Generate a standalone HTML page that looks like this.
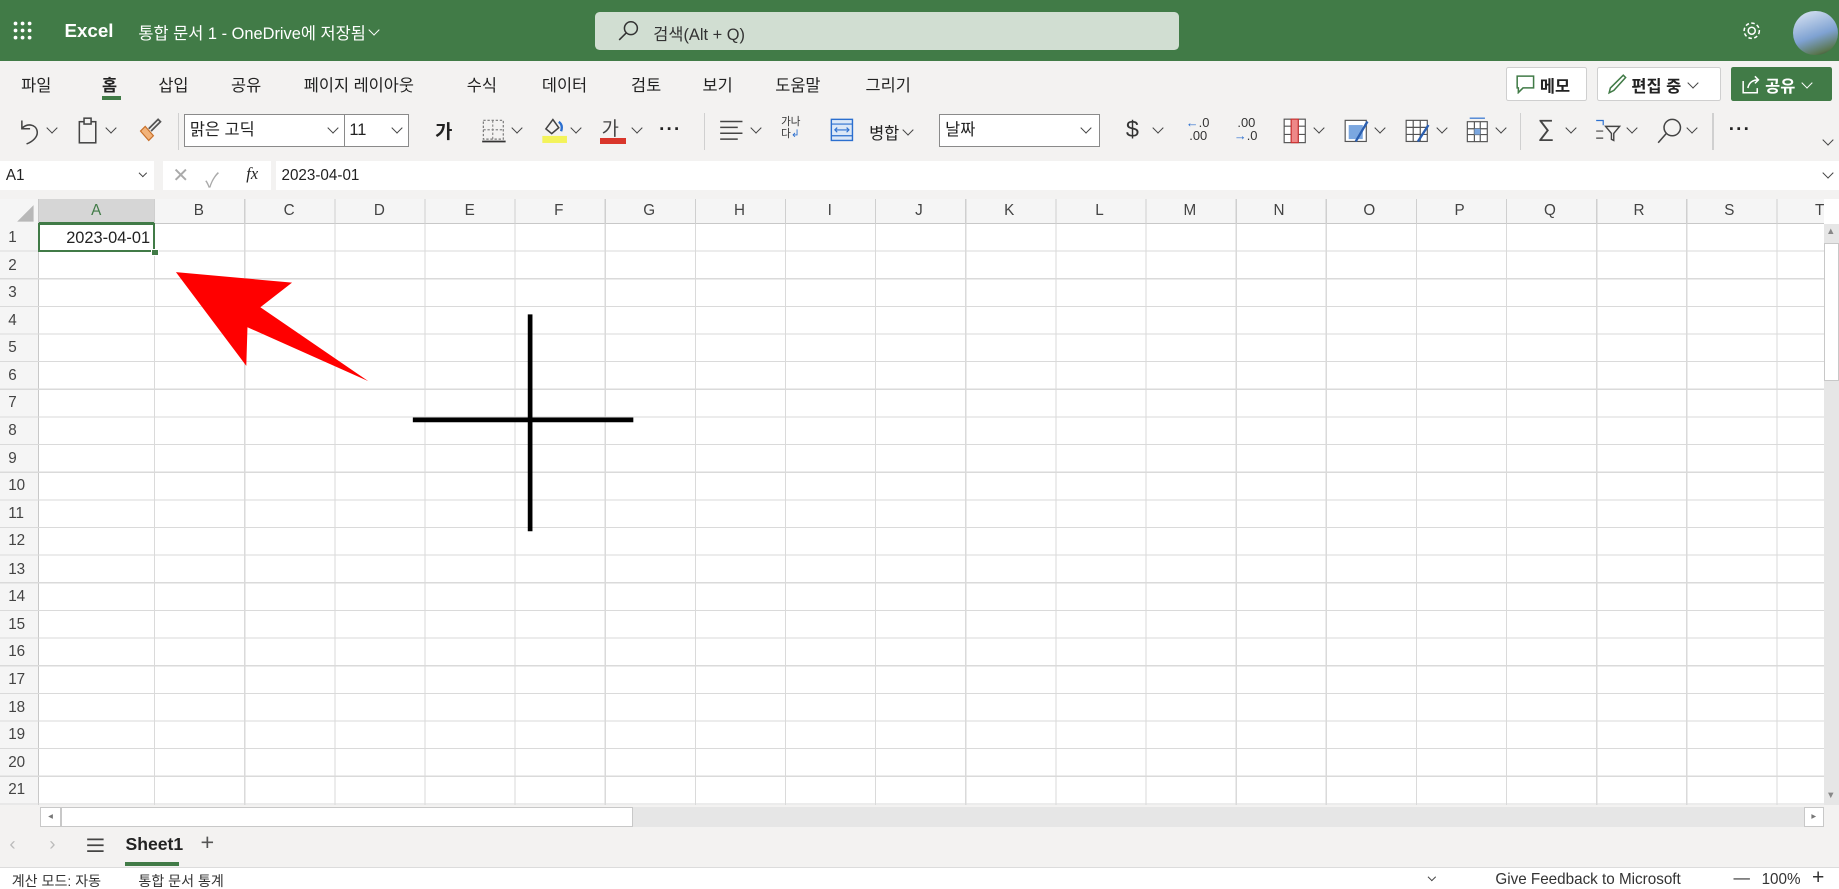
<!DOCTYPE html>
<html><head><meta charset="utf-8">
<style>
html,body{margin:0;padding:0;overflow:hidden}
body{width:1568px;height:758px;zoom:1.17283;position:relative;background:#fff;font-family:"Liberation Sans","Noto Sans CJK KR",sans-serif;color:#222}
.a{position:absolute}
.t{font-size:14px;white-space:nowrap}
.chev{display:inline-block;width:6px;height:6px;border-right:1.3px solid #444;border-bottom:1.3px solid #444;transform:rotate(45deg)}
.sep{position:absolute;width:1px;background:#d0d0d0}
.ib{position:absolute;top:97px;height:28px;background:#fff;border:1px solid #8a8a8a;box-sizing:border-box;font-size:14px;line-height:26px;padding-left:4px}
.ch{position:absolute;top:170px;height:21px;line-height:21px;text-align:center;font-size:13px;color:#444}
.rn{position:absolute;left:0;width:33px;font-size:13px;color:#444;padding-left:7px;box-sizing:border-box}
</style></head><body>
<div class="a" style="left:0;top:0;width:1568px;height:52px;background:#417b47"></div>
<svg class="a" style="left:10px;top:17px" width="20" height="20"><g fill="#fff"><circle cx="3" cy="3" r="1.6"/><circle cx="9" cy="3" r="1.6"/><circle cx="15" cy="3" r="1.6"/><circle cx="3" cy="9" r="1.6"/><circle cx="9" cy="9" r="1.6"/><circle cx="15" cy="9" r="1.6"/><circle cx="3" cy="15" r="1.6"/><circle cx="9" cy="15" r="1.6"/><circle cx="15" cy="15" r="1.6"/></g></svg>
<div class="a t" style="left:55px;top:17px;color:#fff;font-weight:bold;font-size:16px">Excel</div>
<div class="a t" style="left:118px;top:17px;color:#fff;font-size:14px">통합 문서 1 - OneDrive에 저장됨 <span class="chev" style="border-color:#fff;position:relative;top:-4px"></span></div>
<div class="a" style="left:507px;top:10px;width:498px;height:33px;background:#d1ded2;border-radius:4px"></div>
<svg class="a" style="left:527px;top:17px" width="18" height="18"><circle cx="11" cy="7" r="5.5" fill="none" stroke="#333" stroke-width="1.3"/><path d="M7 11 L1 17" stroke="#333" stroke-width="1.3"/></svg>
<div class="a t" style="left:557px;top:18px;color:#333;font-size:14px">검색(Alt + Q)</div>
<svg class="a" style="left:1484px;top:16px" width="20" height="20"><circle cx="10" cy="10" r="3" fill="none" stroke="#fff" stroke-width="1.3"/><circle cx="10" cy="10" r="6.5" fill="none" stroke="#fff" stroke-width="1.3" stroke-dasharray="3 2"/></svg>
<div class="a" style="left:1529px;top:9px;width:38px;height:38px;border-radius:50%;background:linear-gradient(160deg,#dfe8f5,#7fa2d2 55%,#5a7650 85%,#2d3b22)"></div>
<div class="a" style="left:0;top:52px;width:1568px;height:80px;background:#f3f2f1;border-bottom:1px solid #dcdcdc"></div>
<div class="a t" style="top:61px;left:18px">파일</div>
<div class="a t" style="top:61px;left:87px;font-weight:bold">홈</div>
<div class="a" style="top:82px;left:87px;width:16px;height:3px;background:#417b47"></div>
<div class="a t" style="top:61px;left:135px">삽입</div>
<div class="a t" style="top:61px;left:197px">공유</div>
<div class="a t" style="top:61px;left:259px">페이지 레이아웃</div>
<div class="a t" style="top:61px;left:398px">수식</div>
<div class="a t" style="top:61px;left:462px">데이터</div>
<div class="a t" style="top:61px;left:538px">검토</div>
<div class="a t" style="top:61px;left:599px">보기</div>
<div class="a t" style="top:61px;left:661px">도움말</div>
<div class="a t" style="top:61px;left:738px">그리기</div>
<div class="a" style="left:1284px;top:57px;width:69px;height:29px;background:#fff;border:1px solid #cfcfcf;border-radius:2px;box-sizing:border-box"></div>
<svg class="a" style="left:1293px;top:64px" width="16" height="16"><path d="M1 1h14v10H6l-4 4V11H1z" fill="none" stroke="#417b47" stroke-width="1.3"/></svg>
<div class="a t" style="left:1313px;top:62px;font-weight:bold;color:#222">메모</div>
<div class="a" style="left:1362px;top:57px;width:105px;height:29px;background:#fff;border:1px solid #cfcfcf;border-radius:2px;box-sizing:border-box"></div>
<svg class="a" style="left:1371px;top:63px" width="16" height="18"><path d="M13 1l2 2-10 11-4 2 1-4z" fill="none" stroke="#417b47" stroke-width="1.3"/></svg>
<div class="a t" style="left:1391px;top:62px;font-weight:bold">편집 중 <span class="chev" style="position:relative;top:-4px;margin-left:3px"></span></div>
<div class="a" style="left:1476px;top:57px;width:86px;height:29px;background:#417b47;border-radius:2px"></div>
<svg class="a" style="left:1485px;top:63px" width="16" height="18"><path d="M1 6v10h12v-4M5 12c1-5 4-7 9-7M11 2l3 3-3 3" fill="none" stroke="#fff" stroke-width="1.3"/></svg>
<div class="a t" style="left:1505px;top:62px;font-weight:bold;color:#fff">공유 <span class="chev" style="border-color:#fff;position:relative;top:-4px;margin-left:3px"></span></div>
<svg class="a" style="left:14px;top:100px" width="22" height="24"><path d="M5 3v7h7M5 10c4-5 12-4 13 2 1 5-4 9-9 11" fill="none" stroke="#444" stroke-width="1.3"/></svg>
<span class="a chev" style="left:41px;top:106px"></span>
<svg class="a" style="left:66px;top:100px" width="18" height="24"><rect x="2" y="4" width="14" height="18" fill="none" stroke="#444" stroke-width="1.3"/><rect x="6" y="1" width="6" height="5" fill="#f3f2f1" stroke="#444" stroke-width="1.3"/></svg>
<span class="a chev" style="left:91px;top:106px"></span>
<svg class="a" style="left:117px;top:100px" width="22" height="22"><path d="M3 12l7 8 4-4-7-8z" fill="#f2b37a" stroke="#c8702a"/><path d="M10 10l8-8 2 2-8 8" fill="none" stroke="#555" stroke-width="1.5"/></svg>
<div class="sep" style="left:152px;top:96px;height:32px"></div>
<div class="ib" style="left:157px;width:137px">맑은 고딕<span class="chev" style="position:absolute;right:6px;top:8px"></span></div>
<div class="ib" style="left:293px;width:56px">11<span class="chev" style="position:absolute;right:6px;top:8px"></span></div>
<div class="a t" style="left:371px;top:100px;font-weight:bold;font-size:16px">가</div>
<svg class="a" style="left:410px;top:101px" width="22" height="22"><rect x="2" y="2" width="17" height="16" fill="none" stroke="#777" stroke-dasharray="2 1.5"/><path d="M10 2v16M2 10h17" stroke="#888" stroke-dasharray="2 1.5"/><path d="M1 20h20" stroke="#333" stroke-width="1.5"/></svg>
<span class="a chev" style="left:437px;top:106px"></span>
<svg class="a" style="left:460px;top:99px" width="24" height="24"><path d="M5 11l6-8 5 7-6 5z" fill="none" stroke="#444" stroke-width="1.3"/><path d="M16 5c3 2 3 5 2 8" stroke="#2b6fcf" stroke-width="2" fill="none"/><rect x="2" y="17" width="21" height="6" fill="#f3f35a"/></svg>
<span class="a chev" style="left:488px;top:106px"></span>
<div class="a t" style="left:513px;top:97px;font-size:16px;color:#444">가</div>
<div class="a" style="left:512px;top:118px;width:22px;height:5px;background:#d9362b"></div>
<span class="a chev" style="left:540px;top:106px"></span>
<div class="a t" style="left:562px;top:101px;font-size:16px;font-weight:bold;letter-spacing:1px">···</div>
<div class="sep" style="left:600px;top:96px;height:32px"></div>
<svg class="a" style="left:613px;top:101px" width="22" height="20"><path d="M1 3h19M1 8h15M1 13h19M1 18h15" stroke="#444" stroke-width="1.3"/></svg>
<span class="a chev" style="left:641px;top:106px"></span>
<div class="a" style="left:666px;top:100px;font-size:9px;line-height:10px;color:#333">가나<br>다<span style="color:#2b6fcf">↲</span></div>
<svg class="a" style="left:707px;top:100px" width="22" height="22"><rect x="2" y="2" width="18" height="18" fill="#dbe8f7" stroke="#2b6fcf" stroke-width="1.2"/><path d="M2 6h18M2 16h18M6 11h10M7 9l-2 2 2 2M15 9l2 2-2 2" stroke="#2b6fcf" fill="none"/></svg>
<div class="a t" style="left:741px;top:102px">병합 <span class="chev" style="position:relative;top:-4px"></span></div>
<div class="ib" style="left:801px;width:137px">날짜<span class="chev" style="position:absolute;right:8px;top:8px"></span></div>
<div class="a t" style="left:960px;top:99px;font-size:20px;color:#333">$</div>
<span class="a chev" style="left:984px;top:106px"></span>
<div class="a" style="left:1011px;top:100px;font-size:11px;line-height:11px;color:#333"><span style="color:#2b6fcf">←</span>.0<br>&nbsp;.00</div>
<div class="a" style="left:1052px;top:100px;font-size:11px;line-height:11px;color:#333">&nbsp;.00<br><span style="color:#2b6fcf">→</span>.0</div>
<svg class="a" style="left:1094px;top:101px" width="20" height="22"><rect x="1" y="1" width="18" height="20" fill="#fff" stroke="#555"/><path d="M7 1v20M13 1v20M1 7h18M1 14h18" stroke="#555"/><rect x="7" y="1" width="6" height="20" fill="#e88" stroke="#c33"/></svg>
<span class="a chev" style="left:1121px;top:106px"></span>
<svg class="a" style="left:1146px;top:101px" width="22" height="22"><rect x="1" y="2" width="18" height="18" fill="#fff" stroke="#555"/><rect x="4" y="6" width="12" height="12" fill="#7ba7e0"/><path d="M20 3l-10 17" stroke="#2b5fb0" stroke-width="2"/></svg>
<span class="a chev" style="left:1173px;top:106px"></span>
<svg class="a" style="left:1198px;top:101px" width="22" height="22"><rect x="1" y="2" width="18" height="18" fill="#fff" stroke="#555"/><path d="M7 2v18M13 2v18M1 8h18M1 14h18" stroke="#555"/><path d="M20 6l-9 14" stroke="#2b5fb0" stroke-width="2"/></svg>
<span class="a chev" style="left:1226px;top:106px"></span>
<svg class="a" style="left:1249px;top:100px" width="22" height="24"><rect x="2" y="4" width="17" height="17" fill="#fff" stroke="#555"/><path d="M8 4v17M13 4v17M2 10h17M2 15h17" stroke="#555"/><rect x="8" y="10" width="5" height="5" fill="#7ba7e0"/><path d="M4 1h13" stroke="#2b6fcf"/></svg>
<span class="a chev" style="left:1276px;top:106px"></span>
<div class="sep" style="left:1296px;top:96px;height:32px"></div>
<div class="a t" style="left:1311px;top:98px;font-size:20px;color:#444">∑</div>
<span class="a chev" style="left:1336px;top:106px"></span>
<svg class="a" style="left:1360px;top:100px" width="24" height="22"><path d="M1 3h6v4" stroke="#2b6fcf" fill="none"/><path d="M9 8h12l-5 6v6l-2-1v-5z" fill="none" stroke="#444" stroke-width="1.2"/><path d="M1 12h6M1 18h6" stroke="#444"/></svg>
<span class="a chev" style="left:1388px;top:106px"></span>
<svg class="a" style="left:1413px;top:100px" width="22" height="24"><circle cx="13" cy="9" r="7" fill="none" stroke="#444" stroke-width="1.3"/><path d="M8 14L1 22" stroke="#444" stroke-width="1.3"/></svg>
<span class="a chev" style="left:1439px;top:106px"></span>
<div class="sep" style="left:1460px;top:96px;height:32px"></div>
<div class="a t" style="left:1474px;top:101px;font-size:16px;font-weight:bold;letter-spacing:1px">···</div>
<span class="a chev" style="left:1555px;top:116px"></span>
<div class="a" style="left:0;top:132px;width:1568px;height:38px;background:#f3f2f1"></div>
<div class="a" style="left:0;top:137px;width:131px;height:25px;background:#fff;font-size:13px;line-height:25px;padding-left:5px;box-sizing:border-box">A1<span class="chev" style="position:absolute;right:7px;top:8px;width:4px;height:4px"></span></div>
<div class="a" style="left:139px;top:137px;width:92px;height:25px;background:#fff"></div>
<div class="a" style="left:147px;top:140px;font-size:17px;color:#aaa">✕</div>
<div class="a" style="left:175px;top:140px;font-size:17px;color:#aaa">✓</div>
<div class="a" style="left:210px;top:140px;font-size:14px;font-style:italic;font-family:'Liberation Serif',serif">fx</div>
<div class="a" style="left:235px;top:137px;width:1333px;height:25px;background:#fff;font-size:13px;line-height:25px;padding-left:5px;box-sizing:border-box">2023-04-01<span class="chev" style="position:absolute;right:6px;top:7px"></span></div>
<div class="a" style="left:0;top:170px;width:1555px;height:21px;background:#f5f5f5;border-bottom:1px solid #c8c8c8;box-sizing:border-box"></div>
<div class="a" style="left:0;top:170px;width:33px;height:518px;background:#f5f5f5;border-right:1px solid #c8c8c8;box-sizing:border-box"></div>
<svg class="a" style="left:14px;top:174px" width="16" height="16"><path d="M15 1V15H1z" fill="#b8b8b8"/></svg>
<div class="a" style="left:33px;top:170px;width:98px;height:21px;background:#d6d6d6;border-bottom:2px solid #417b47;box-sizing:border-box"></div>
<div class="a" style="left:131px;top:191px;width:1424px;height:497px;background-image:repeating-linear-gradient(90deg,#dadada 0 1px,transparent 1px 76.85px)"></div>
<div class="a" style="left:33px;top:191px;width:1522px;height:497px;background-image:repeating-linear-gradient(180deg,transparent 0 22.57px,#dadada 22.57px 23.57px)"></div>
<div class="a" style="left:131px;top:170px;width:1424px;height:21px;background-image:repeating-linear-gradient(90deg,#cfcfcf 0 1px,transparent 1px 76.85px)"></div>
<div class="ch" style="left:33px;width:98px;color:#417b47">A</div>
<div class="ch" style="left:131px;width:77px">B</div>
<div class="ch" style="left:208px;width:77px">C</div>
<div class="ch" style="left:285px;width:77px">D</div>
<div class="ch" style="left:362px;width:77px">E</div>
<div class="ch" style="left:438px;width:77px">F</div>
<div class="ch" style="left:515px;width:77px">G</div>
<div class="ch" style="left:592px;width:77px">H</div>
<div class="ch" style="left:669px;width:77px">I</div>
<div class="ch" style="left:745px;width:77px">J</div>
<div class="ch" style="left:822px;width:77px">K</div>
<div class="ch" style="left:899px;width:77px">L</div>
<div class="ch" style="left:976px;width:77px">M</div>
<div class="ch" style="left:1052px;width:77px">N</div>
<div class="ch" style="left:1129px;width:77px">O</div>
<div class="ch" style="left:1206px;width:77px">P</div>
<div class="ch" style="left:1283px;width:77px">Q</div>
<div class="ch" style="left:1359px;width:77px">R</div>
<div class="ch" style="left:1436px;width:77px">S</div>
<div class="ch" style="left:1513px;width:77px">T</div>
<div class="a" style="left:0;top:191px;width:33px;height:497px;background-image:repeating-linear-gradient(180deg,transparent 0 22.57px,#dadada 22.57px 23.57px)"></div>
<div class="rn" style="top:195px">1</div><div class="rn" style="top:219px">2</div><div class="rn" style="top:242px">3</div><div class="rn" style="top:266px">4</div><div class="rn" style="top:289px">5</div><div class="rn" style="top:313px">6</div><div class="rn" style="top:336px">7</div><div class="rn" style="top:360px">8</div><div class="rn" style="top:384px">9</div><div class="rn" style="top:407px">10</div><div class="rn" style="top:431px">11</div><div class="rn" style="top:454px">12</div><div class="rn" style="top:478px">13</div><div class="rn" style="top:501px">14</div><div class="rn" style="top:525px">15</div><div class="rn" style="top:548px">16</div><div class="rn" style="top:572px">17</div><div class="rn" style="top:596px">18</div><div class="rn" style="top:619px">19</div><div class="rn" style="top:643px">20</div><div class="rn" style="top:666px">21</div>
<div class="a" style="left:32px;top:190px;width:100px;height:25px;border:2px solid #417b47;box-sizing:border-box"></div>
<div class="a" style="left:129px;top:212px;width:5px;height:5px;background:#417b47;border:1px solid #fff"></div>
<div class="a" style="left:34px;top:195px;width:94px;text-align:right;font-size:14px">2023-04-01</div>
<svg class="a" style="left:0;top:0" width="1568" height="758">
<polygon points="150,232 249,241 222,262 314,325 211,279 210,312" fill="#ff0000"/>
<path d="M452 268V453M352 358H540" stroke="#000" stroke-width="4"/>
</svg>
<div class="a" style="left:1555px;top:191px;width:13px;height:495px;background:#e6e6e6"></div>
<div class="a" style="left:1555px;top:207px;width:13px;height:118px;background:#fff;border:1px solid #c8c8c8;box-sizing:border-box"></div>
<div class="a" style="left:1557px;top:193px;font-size:8px;color:#888">▲</div>
<div class="a" style="left:1557px;top:674px;font-size:8px;color:#888">▼</div>
<div class="a" style="left:0;top:686px;width:1568px;height:22px;background:#f3f2f1"></div>
<div class="a" style="left:34px;top:688px;width:1521px;height:17px;background:#e6e6e6"></div>
<div class="a" style="left:34px;top:688px;width:18px;height:17px;background:#fff;border:1px solid #c8c8c8;box-sizing:border-box;font-size:8px;color:#777;line-height:15px;text-align:center">◂</div>
<div class="a" style="left:52px;top:688px;width:488px;height:17px;background:#fff;border:1px solid #c8c8c8;box-sizing:border-box"></div>
<div class="a" style="left:1538px;top:688px;width:17px;height:17px;background:#fff;border:1px solid #c8c8c8;box-sizing:border-box;font-size:8px;color:#777;line-height:15px;text-align:center">▸</div>
<div class="a" style="left:0;top:706px;width:1568px;height:33px;background:#f3f2f1;border-bottom:1px solid #dcdcdc"></div>
<div class="a" style="left:8px;top:710px;font-size:16px;color:#bbb">‹</div>
<div class="a" style="left:42px;top:710px;font-size:16px;color:#bbb">›</div>
<svg class="a" style="left:73px;top:714px" width="16" height="14"><path d="M1 2h14M1 7h14M1 12h14" stroke="#444" stroke-width="1.5"/></svg>
<div class="a" style="left:107px;top:711px;font-size:15px;font-weight:bold">Sheet1</div>
<div class="a" style="left:107px;top:735px;width:46px;height:3px;background:#417b47"></div>
<div class="a" style="left:171px;top:707px;font-size:20px;color:#555">+</div>
<div class="a" style="left:10px;top:743px;font-size:12px;color:#333">계산 모드: 자동</div>
<div class="a" style="left:118px;top:743px;font-size:12px;color:#333">통합 문서 통계</div>
<span class="a chev" style="left:1218px;top:745px;width:4px;height:4px"></span>
<div class="a" style="left:1275px;top:743px;font-size:13px;color:#333">Give Feedback to Microsoft</div>
<div class="a" style="left:1478px;top:741px;font-size:14px;color:#333">—</div>
<div class="a" style="left:1502px;top:743px;font-size:13px;color:#333">100%</div>
<div class="a" style="left:1545px;top:738px;font-size:18px;color:#333">+</div>
</body></html>
